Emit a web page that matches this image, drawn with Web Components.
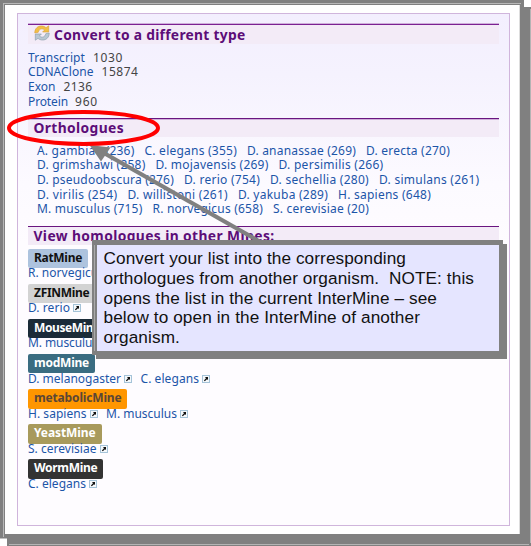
<!DOCTYPE html>
<html lang="en">
<head>
<meta charset="utf-8">
<title>Convert list</title>
<style>
html, body { margin: 0; background: #fff; }
body { width: 531px; height: 546px; overflow: hidden; position: relative; font-family: "Noto Sans", sans-serif; font-size: 12px; color: #444; }
</style>
</head>
<body>
<shadow-frame>
  <mine-panel>
    <section-title w="191.5" icon>Convert to a different type</section-title>
    <type-list></type-list>
    <section-title w="90.5">Orthologues</section-title>
    <orthologue-list></orthologue-list>
    <section-title w="241" style="--light:#f3ebf7">View homologues in other Mines:</section-title>
    <mine-list></mine-list>
  </mine-panel>
</shadow-frame>
<callout-arrow></callout-arrow>
<callout-note>
  <fit-text w="302.5">Convert your list into the corresponding</fit-text>
  <fit-text w="370.5">orthologues from another organism.&nbsp; NOTE: this</fit-text>
  <fit-text w="333.5">opens the list in the current InterMine – see</fit-text>
  <fit-text w="316.5">below to open in the InterMine of another</fit-text>
  <fit-text w="76.5">organism.</fit-text>
</callout-note>
<script>
const shadow = (el, html) => { el.attachShadow({ mode: 'open' }).innerHTML = html; };

/* Text run tracked to a given advance width. */
customElements.define('fit-text', class extends HTMLElement {
  connectedCallback() {
    if (this.shadowRoot) return;
    shadow(this, `<style>:host{display:inline-block;white-space:pre}span{display:inline-block}</style><span><slot></slot></span>`);
    requestAnimationFrame(() => this.fit());
    this.fit();
  }
  fit() {
    const s = this.shadowRoot.querySelector('span'), w = +this.getAttribute('w');
    s.style.letterSpacing = '0px';
    const n = this.textContent.length, nat = s.getBoundingClientRect().width;
    if (!nat || !n) return;
    s.style.letterSpacing = (w - nat) / n + 'px';
    this.style.width = w + 'px';
  }
});

customElements.define('shadow-frame', class extends HTMLElement {
  constructor() { super(); shadow(this, `<style>
    :host{display:block;box-sizing:border-box;width:524px;height:539px;padding:5px;
      background:linear-gradient(#b8b8b8,#b8b8b8) 3px 3px/518px 1px no-repeat,linear-gradient(#b8b8b8,#b8b8b8) 3px 3px/1px 534px no-repeat,#808080;
      box-shadow:7px 7px 0 #808080}
    .paper{box-sizing:border-box;width:515px;height:529px;background:#fff;padding:8px 0 0 12px;border-right:1px solid #ddd}
    </style><div class="paper"><slot></slot></div>`); }
});

customElements.define('mine-panel', class extends HTMLElement {
  constructor() { super(); shadow(this, `<style>
    :host{display:block;box-sizing:border-box;width:493px;height:513px;border:1px solid #d0b5dc;padding:9px 10px 0;
      background:linear-gradient(#f3effe 0,#f5f2fe 60px,#fcfaff 170px,#fefcff 230px)}
    </style><slot></slot>`); }
});

customElements.define('section-title', class extends HTMLElement {
  connectedCallback() {
    if (this.shadowRoot) return;
    const icon = this.hasAttribute('icon');
    shadow(this, `<style>
    :host{display:block;box-sizing:border-box;height:${icon ? 21 : 19}px;width:471px;background:#f3ebf7;
      border-top:1px solid ${icon ? '#cfb0da' : '#6a1580'};box-shadow:inset 0 1px 0 var(--light,${icon ? '#7b2193' : '#cfb0da'});color:#5c0d78;font-weight:700;font-size:13.8px}
    .row{display:flex;align-items:flex-start;padding-left:${icon ? 6 : 5.5}px;line-height:19px;height:19px}
    svg{width:16px;height:16px;margin:1px 4px 0 0;flex:none}
    fit-text{margin-top:${icon ? 1 : -1}px}
    </style><div class="row">${icon ? `<svg viewBox="0 0 16 16">
      <path d="M.8 8C.6 3.500 4 .8 7.500 1c2 0 3.400.7 4.500 1.700L14.700.8V7H8.600l2-2C8.300 3 5 3.600 4.200 7.300z" fill="#f2bf45" stroke="#d69d35" stroke-width=".6"/>
      <path d="M15.200 8c.1 4.500-3.200 7.200-6.700 7-2 0-3.400-.7-4.500-1.700L1.300 15.200V9h6.100l-2 2c2.300 2 5.600 1.400 6.400-2.300z" fill="#b9c7d2" stroke="#8598a6" stroke-width=".6"/></svg>` : ''}
      <fit-text w="${this.getAttribute('w')}">${this.textContent}</fit-text></div>`);
  }
});

customElements.define('type-list', class extends HTMLElement {
  constructor() { super();
    const rows = [['Transcript',57,'1030',30,8],['CDNAClone',65.5,'15874',37,8],['Exon',27.5,'2136',29,8],['Protein',40,'960',23,7]];
    shadow(this, `<style>:host{display:block;box-sizing:border-box;height:74px;padding-top:6.6px}
    div{display:flex;line-height:14.67px;height:14.67px}.a{color:#1c55a8}</style>` +
    rows.map(r => `<div style="gap:${r[4]}px"><fit-text class="a" w="${r[1]}">${r[0]}</fit-text><fit-text w="${r[3]}">${r[2]}</fit-text></div>`).join('')); }
});

customElements.define('orthologue-list', class extends HTMLElement {
  constructor() { super();
    const rows = [
      [['A. gambiae (236)',97.5],['C. elegans (355)',92.5],['D. ananassae (269)',109],['D. erecta (270)',84]],
      [['D. grimshawi (258)',108.5],['D. mojavensis (269)',113],['D. persimilis (266)',105]],
      [['D. pseudoobscura (276)',137],['D. rerio (754)',76],['D. sechellia (280)',99],['D. simulans (261)',100.5]],
      [['D. virilis (254)',80.5],['D. willistoni (261)',100.5],['D. yakuba (289)',90],['H. sapiens (648)',93]],
      [['M. musculus (715)',105.5],['R. norvegicus (658)',110.5],['S. cerevisiae (20)',96]]];
    shadow(this, `<style>:host{display:block;box-sizing:border-box;height:89px;padding:6.6px 0 0 9px;color:#1c55a8}
    div{display:flex;gap:10px;line-height:14.67px;height:14.67px}</style>` +
    rows.map(r => `<div>${r.map(c => `<fit-text w="${c[1]}">${c[0]}</fit-text>`).join('')}</div>`).join('')); }
});

customElements.define('ext-icon', class extends HTMLElement {
  constructor() { super(); shadow(this, `<style>:host{display:block;width:8px;height:8px;flex:none}svg{display:block}</style>
    <svg width="8" height="8" viewBox="0 0 8 8"><rect x=".5" y=".5" width="7" height="7" fill="#f4f8fb" stroke="#a5c3d8"/>
    <path d="M3 2H6V5L5 4.200 2.800 6.300 1.900 5.400 4 3.200z" fill="#111"/></svg>`); }
});

customElements.define('mine-entry', class extends HTMLElement {
  connectedCallback() {
    if (this.shadowRoot) return;
    const [name, bw, tw, bg, fg, links] = this.data;
    shadow(this, `<style>:host{display:block;height:35.17px}
    .b{box-sizing:border-box;height:19.4px;border-radius:2px;padding:2px 0 0 6px;font-weight:700;line-height:14px;width:${bw}px;background:${bg};color:${fg}}
    .l{display:flex;color:#1c55a8;line-height:14px;height:14px;margin-top:-1.8px}
    ext-icon{margin:3px 8.500px 0 3px}</style>
    <div class="b"><fit-text w="${tw}">${name}</fit-text></div>
    <div class="l">${links.map(l => `<fit-text w="${l[1]}">${l[0]}</fit-text><ext-icon></ext-icon>`).join('')}</div>`);
  }
});

customElements.define('mine-list', class extends HTMLElement {
  connectedCallback() {
    if (this.shadowRoot) return;
    shadow(this, `<style>:host{display:block;padding-top:3.5px}</style>`);
    [['RatMine',60,48,'#adc3de','#111',[['R. norvegicus',76]]],
     ['ZFINMine',67,55.5,'#d3d3d3','#111',[['D. rerio',42]]],
     ['MouseMine',77,66,'#1b2b38','#fff',[['M. musculus',70]]],
     ['modMine',67,55,'#3a6c81','#fff',[['D. melanogaster',93],['C. elegans',58.5]]],
     ['metabolicMine',99,87.5,'#ff9600','#5b4636',[['H. sapiens',58.5],['M. musculus',71]]],
     ['YeastMine',74,61.5,'#a89a5c','#fff',[['S. cerevisiae',68.5]]],
     ['WormMine',75,63.5,'#333','#fff',[['C. elegans',58]]]
    ].forEach(d => { const e = document.createElement('mine-entry'); e.data = d; this.shadowRoot.append(e); });
  }
});

/* Annotation overlay: highlight ring and pointer. */
customElements.define('callout-arrow', class extends HTMLElement {
  constructor() { super(); shadow(this, `<style>:host{position:absolute;left:0;top:0}svg{display:block}</style>
    <svg width="531" height="546" viewBox="0 0 531 546"><path d="M0 538.500H7V546H0zM524 0H531V7H524z" fill="#fff"/>
    <path d="M530.500 9V543M9 544.500H529" stroke="#b4b4b4" fill="none"/>
    <path d="M103 152.500L264 244" stroke="#808080" stroke-width="4.200"/><path d="M89.500 145L110.500 147.500 101 161.500z" fill="#808080"/>
    <ellipse cx="83.500" cy="128" rx="74.500" ry="16" fill="none" stroke="#f00" stroke-width="4"/></svg>`); }
});

customElements.define('callout-note', class extends HTMLElement {
  constructor() { super(); shadow(this, `<style>
    :host{position:absolute;left:92px;top:240px;box-sizing:border-box;width:411px;height:115px;background:#808080;padding:5px 0 0 3px;
      box-shadow:4px 4px 0 #808080;font:17.2px "Liberation Sans",sans-serif;color:#111}
    .in{box-sizing:border-box;width:404px;height:106px;background:#e5e5ff;padding:4.200px 0 0 7.500px;border-left:1px solid #808080;
      box-shadow:inset 1px 0 #808080,-1px 0 #aaa;display:flex;flex-direction:column;align-items:flex-start;line-height:19.7px}
    </style><div class="in"><slot></slot></div>`); }
});
</script>
</body>
</html>
